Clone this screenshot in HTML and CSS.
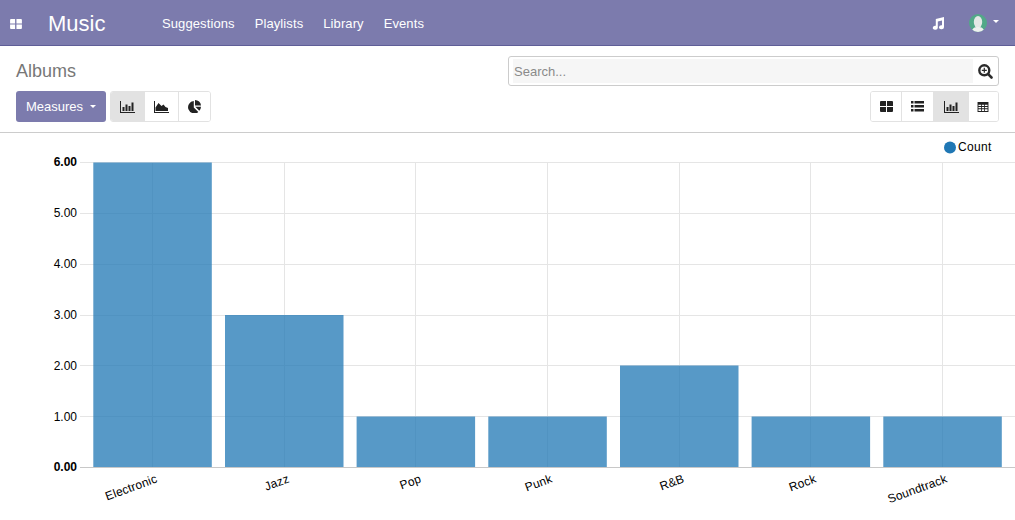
FILE: index.html
```html
<!DOCTYPE html>
<html lang="en">
<head>
<meta charset="UTF-8" />
<title>Albums - Music</title>
<link rel="stylesheet" href="styles.css">
</head>
<body>

<header class="navbar">
  <a class="apps-toggle" href="#">
    <svg width="12" height="10" viewBox="0 0 13 11"><path fill="#fff" d="M0 1a1 1 0 0 1 1-1h4.500v5H0zM7 0h5a1 1 0 0 1 1 1v4H7zM0 6h5.500v5H1a1 1 0 0 1-1-1zM7 6h6v4a1 1 0 0 1-1 1H7z"/></svg>
  </a>
  <a class="brand" href="#">Music</a>
  <nav class="nav-links">
    <a href="#">Suggestions</a>
    <a href="#">Playlists</a>
    <a href="#">Library</a>
    <a href="#">Events</a>
  </nav>
  <div class="nav-right">
    <svg class="note" width="12" height="13" viewBox="0 0 12 13"><path fill="#fff" d="M3.800 2 12 0v10.200a2.500 2 0 1 1-2-2V3.600L5.800 4.600v6.200a2.500 2 0 1 1-2-2z"/></svg>
    <a class="user" href="#">
      <svg width="18" height="18" viewBox="0 0 18 18">
        <defs><clipPath id="avatarClip"><circle cx="9" cy="9" r="9"/></clipPath></defs>
        <circle cx="9" cy="9" r="9" fill="#52a888"/>
        <g clip-path="url(#avatarClip)">
          <ellipse cx="9" cy="8" rx="4.200" ry="6" fill="#e4e8e6"/>
          <path fill="#eef0ef" d="M3 18c0-4 2.500-5 6-5s6 1 6 5z"/>
        </g>
      </svg>
      <span class="caret"></span>
    </a>
  </div>
</header>

<section class="control-panel">
  <div class="panel-row">
    <h1 class="page-title">Albums</h1>
    <div class="search-box">
      <input class="search-input" type="text" placeholder="Search..." />
      <svg class="search-icon" width="15" height="15" viewBox="0 0 15 15">
        <circle cx="6.300" cy="6.300" r="5" fill="none" stroke="#2b2b2b" stroke-width="2.400"/>
        <path stroke="#2b2b2b" stroke-width="2.600" stroke-linecap="round" d="M10.200 10.200l3.300 3.300"/>
        <path stroke="#2b2b2b" stroke-width="1.200" d="M6.300 3.800v5M3.800 6.300h5"/>
      </svg>
    </div>
  </div>
  <div class="panel-row">
    <div class="panel-left">
      <button class="btn-measures">Measures <span class="caret"></span></button>
      <div class="btn-group">
        <button class="btn-icon chart-bar active">
          <svg width="15" height="12" viewBox="0 0 15 12"><path fill="#222" d="M0 0h1v11h14v1H0zM2.500 6h2v4h-2zM5.500 3.500h2V10h-2zM8.500 5h2v5h-2zM11.500 1.500h2V10h-2z"/></svg>
        </button>
        <button class="btn-icon chart-line">
          <svg width="15" height="12" viewBox="0 0 15 12"><path fill="#222" d="M0 0h1v11h14v1H0zM1.500 10V6.500L4.500 2l3 3 2-1.500 2 2.500 2.500 1v3z"/></svg>
        </button>
        <button class="btn-icon chart-pie">
          <svg width="13" height="13" viewBox="0 0 13 13"><path fill="#222" d="M5.800 1v6.400l4.500 4.500A6.200 6.200 0 1 1 5.800 1zM7 0a6 6 0 0 1 6 5.600H7zM7.300 6.800H13a6 6 0 0 1-1.700 4z"/></svg>
        </button>
      </div>
    </div>
    <div class="btn-group">
      <button class="btn-icon view-kanban">
        <svg width="13" height="11" viewBox="0 0 13 11"><path fill="#222" d="M0 1a1 1 0 0 1 1-1h5v5H0zM7 0h5a1 1 0 0 1 1 1v4H7zM0 6h6v5H1a1 1 0 0 1-1-1zM7 6h6v4a1 1 0 0 1-1 1H7z"/></svg>
      </button>
      <button class="btn-icon view-list">
        <svg width="13" height="11" viewBox="0 0 13 11"><path fill="#222" d="M0 0h2.500v2.500H0zM3.500 0H13v2.500H3.500zM0 4h2.500v2.500H0zM3.500 4H13v2.500H3.500zM0 8h2.500v2.500H0zM3.500 8H13v2.500H3.500z"/></svg>
      </button>
      <button class="btn-icon view-graph active">
        <svg width="15" height="12" viewBox="0 0 15 12"><path fill="#222" d="M0 0h1v11h14v1H0zM2.500 6h2v4h-2zM5.500 3.500h2V10h-2zM8.500 5h2v5h-2zM11.500 1.500h2V10h-2z"/></svg>
      </button>
      <button class="btn-icon view-pivot">
        <svg width="12" height="10" viewBox="0 0 12 11"><path fill="#222" fill-rule="evenodd" d="M0 0h12v11H0zM1 3v1.500h2.800V3zM4.700 3v1.500h2.600V3zM8.200 3v1.500H11V3zM1 5.500V7h2.800V5.500zM4.700 5.500V7h2.600V5.500zM8.200 5.500V7H11V5.500zM1 8v2h2.800V8zM4.700 8v2h2.600V8zM8.200 8v2H11V8z"/></svg>
      </button>
    </div>
  </div>
</section>

<main class="chart">
  <svg class="chart-svg" width="1015" height="387" viewBox="0 133 1015 387">
    <g class="grid">
      <path d="M80 162.500H1015M80 213.500H1015M80 264.500H1015M80 315.500H1015M80 365.500H1015M80 416.500H1015"/>
      <path d="M152.500 162V467M284.500 162V467M415.500 162V467M547.500 162V467M679.500 162V467M810.500 162V467M942.500 162V467"/>
    </g>
    <path class="axis" d="M80 467.500H1015"/>

    <g class="bars">
      <rect x="93.300" y="162.500" width="118.500" height="304.500"/>
      <rect x="225" y="315" width="118.500" height="152"/>
      <rect x="356.600" y="416.500" width="118.500" height="50.500"/>
      <rect x="488.300" y="416.500" width="118.500" height="50.500"/>
      <rect x="620" y="365.500" width="118.500" height="101.500"/>
      <rect x="751.600" y="416.500" width="118.500" height="50.500"/>
      <rect x="883.300" y="416.500" width="118.500" height="50.500"/>
    </g>

    <g class="y-labels">
      <text class="y-edge" x="77" y="166">6.00</text>
      <text x="77" y="217">5.00</text>
      <text x="77" y="268">4.00</text>
      <text x="77" y="319">3.00</text>
      <text x="77" y="370">2.00</text>
      <text x="77" y="421">1.00</text>
      <text class="y-edge" x="77" y="471">0.00</text>
    </g>

    <g class="x-labels">
      <text transform="translate(158 482) rotate(-20)">Electronic</text>
      <text transform="translate(290 482) rotate(-20)">Jazz</text>
      <text transform="translate(422 482) rotate(-20)">Pop</text>
      <text transform="translate(553 482) rotate(-20)">Punk</text>
      <text transform="translate(685 482) rotate(-20)">R&amp;B</text>
      <text transform="translate(817 482) rotate(-20)">Rock</text>
      <text transform="translate(948 482) rotate(-20)">Soundtrack</text>
    </g>

    <circle cx="950" cy="147.500" r="6" fill="#1f77b4"/>
    <text class="legend-text" x="958" y="151">Count</text>
  </svg>
</main>

</body>
</html>
```

FILE: styles.css
```css
* { box-sizing: border-box; }
body { margin: 0; font-family: "Liberation Sans", Arial, sans-serif; font-size: 13px; background: #fff; overflow: hidden; }
a { text-decoration: none; color: inherit; }
button { font-family: inherit; font-size: 13px; cursor: pointer; }

.caret { display: inline-block; width: 0; height: 0; border-top: 3px solid #fff; border-left: 3px solid transparent; border-right: 3px solid transparent; }

.navbar { display: flex; align-items: center; height: 46px; background: #7c7bad; border-bottom: 1px solid #5f5e97; color: #fff; }
.apps-toggle { display: flex; margin: 2px 0 0 10px; width: 38px; }
.brand { font-size: 22px; width: 114px; margin-top: 2px; }
.nav-links { display: flex; gap: 20px; margin-top: 2px; letter-spacing: .1px; }
.nav-right { display: flex; align-items: center; margin-left: auto; padding-right: 16px; }
.note { margin: 2px 25px 0 0; }
.user { display: flex; align-items: center; gap: 6px; }
.user .caret { margin-bottom: 2px; }

.control-panel { height: 87px; padding: 10px 16px 0; border-bottom: 1px solid #ccc; }
.panel-row { display: flex; justify-content: space-between; align-items: center; }
.page-title { margin: 0; font-size: 18px; font-weight: normal; color: #777; }
.search-box { display: flex; align-items: center; width: 491px; height: 30px; padding: 2px 5px 2px 4px; border: 1px solid #ccc; border-radius: 3px; }
.search-input { flex: 1; height: 24px; padding: 0 0 0 1px; border: none; outline: none; background: #f6f6f6; font-family: inherit; font-size: 13px; }
.search-input::placeholder { color: #8a8a8a; opacity: 1; }
.search-icon { margin-left: 5px; }

.panel-row + .panel-row { margin-top: 5px; }
.panel-left { display: flex; gap: 4px; }
.btn-measures { display: flex; align-items: center; gap: 7px; width: 90px; height: 31px; padding: 0 10px; border: none; border-radius: 3px; background: #7c7bad; color: #fff; }
.btn-group { display: flex; height: 31px; border: 1px solid #e2e2e2; border-radius: 3px; overflow: hidden; }
.btn-icon { display: flex; align-items: center; justify-content: center; padding: 0; border: none; border-left: 1px solid #e2e2e2; background: #fff; }
.btn-icon:first-child { border-left: none; }
.btn-icon.active { background: #e2e2e2; }
.chart-bar { width: 33px; }
.chart-line { width: 34px; }
.chart-pie { width: 32px; }
.view-kanban { width: 30px; }
.view-list { width: 32px; }
.view-graph { width: 35px; }
.view-pivot { width: 30px; padding-right: 1px; }

.chart { height: 387px; }
.chart-svg { display: block; }
.grid path { fill: none; stroke: #e5e5e5; stroke-width: 1; }
.axis { fill: none; stroke: #c8c8c8; stroke-width: 1; }
.bars rect { fill: #1f77b4; fill-opacity: .75; }
.y-labels text { font-size: 12px; text-anchor: end; fill: #000; }
.y-labels .y-edge { font-weight: bold; }
.x-labels text { font-size: 12px; text-anchor: end; fill: #000; letter-spacing: .15px; }
.legend-text { font-size: 12px; fill: #000; letter-spacing: .35px; }
```
